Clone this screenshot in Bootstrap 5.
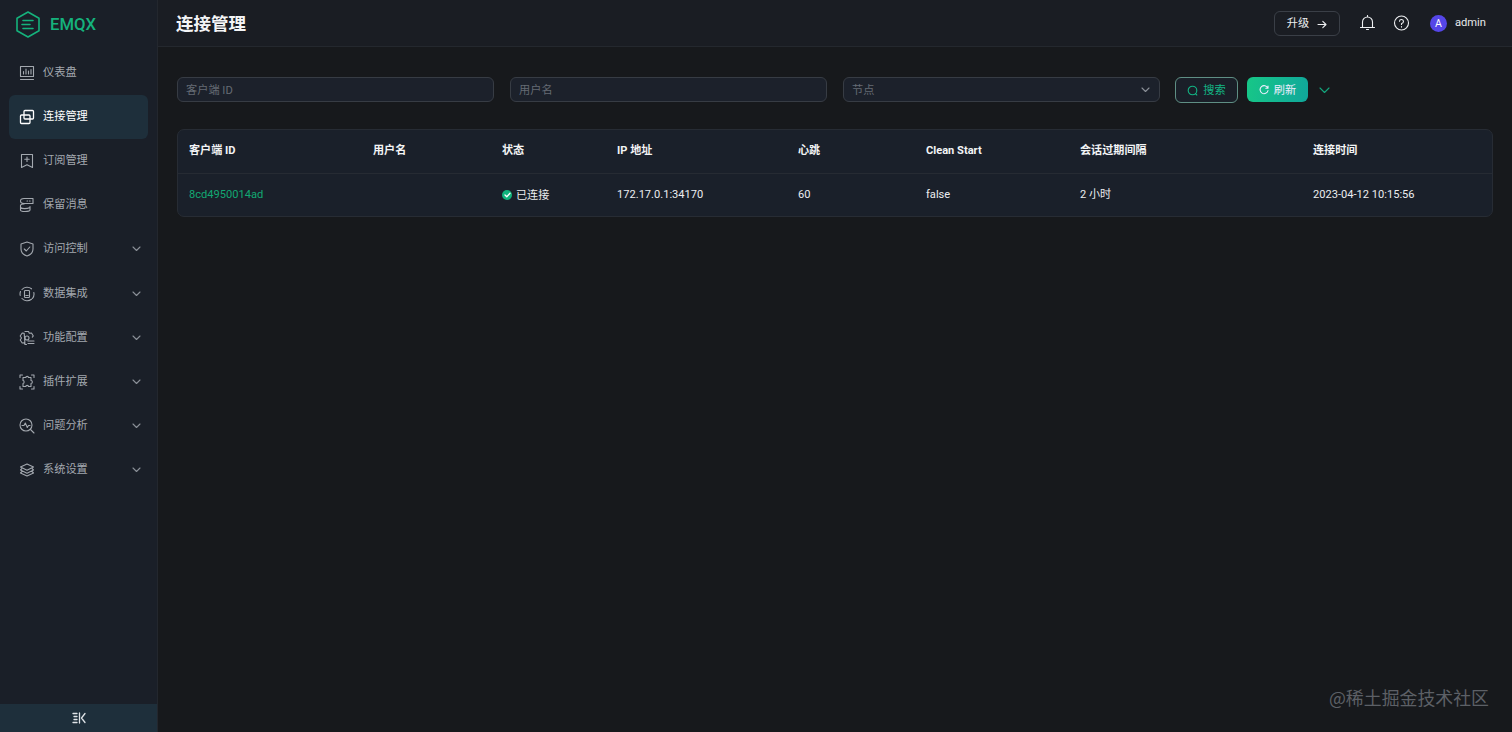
<!DOCTYPE html>
<html lang="zh">
<head>
<meta charset="utf-8">
<title>EMQX</title>
<link href="https://cdn.jsdelivr.net/npm/bootstrap@5.3.0/dist/css/bootstrap.min.css" rel="stylesheet">
<style>
html,body{height:100%;overflow:hidden}
body{background:#17191c;color:#e9ebee;font-family:Roboto,"Noto Sans CJK SC",sans-serif;font-size:11.2px}
.shell{height:732px}
.side{width:158px;flex:none;background:#1a1f28;border-right:1px solid #23272e}
.brand{height:50.5px;padding:11px 0 0 16px;color:#15b27c;font-size:16.7px;font-weight:500;gap:10px}
.menu-row{height:44.2px;padding:0 16px 0 19px;color:#a3a8af;gap:8px}
.menu-row svg.ico{width:16px;height:16px;flex:none}
.menu-row svg.chev{width:9px;height:6px;color:#8b9098}
.menu-row .lbl{flex:1;padding-top:1px}
.menu-row.on{color:#fff;background:#1e2f3b;border-radius:6px;margin:0 9px;padding:0 0 0 10px;width:139px}
.ico{fill:none;stroke:currentColor;stroke-width:1.1;stroke-linecap:round;stroke-linejoin:round}
.chev{width:9px;height:6px;flex:none;color:#8b9098}
.fold{height:28px;background:#1e2f3b;color:#dfe3e7}
.topbar{height:47px;flex:none;border-bottom:1px solid #24282e;background:#1a1d23;padding:1px 26px 0 18px}
.page-title{font-size:17.5px;font-weight:700;color:#f4f5f6;margin:0;padding-top:2px}
.up-btn{width:66px;height:25px;border:1px solid #3a3f47;border-radius:6px;color:#eceef0;gap:8px;background:transparent;font-size:11.2px;line-height:1;padding:1px 0 0}
.avatar{width:17px;height:17px;background:#5546e8;color:#fff;font-size:10.5px}
.tool-ico{width:17px;height:17px;color:#eef0f2}
.filters{padding:30px 0 0 19px}
.field{width:317px;height:25px;background:#1c212b;border:1px solid #373c44;border-radius:6px;color:#6a7079;padding:2px 8px 0;font-size:11.2px;box-shadow:none}
.field::placeholder{color:#656b74;opacity:1}
.field-wrap{width:317px;margin-left:16px}
.field-wrap .chev{position:absolute;right:10px;top:10px}
.field-mid{margin-left:16px}
.btn-find{width:63px;height:26px;border:1px solid #5f8f84;border-radius:6px;background:#1a1f28;color:#13b584;font-size:11.2px;line-height:1;padding:0;gap:5px;margin-left:15px}
.btn-reload{width:61px;height:25px;border:0;border-radius:6px;background:linear-gradient(100deg,#17c787,#10a79b);color:#eef;font-size:11.2px;line-height:1;padding:0;gap:5px;margin-left:9px}
.btn-word{padding-top:2px}
.more{width:11px;height:7px;color:#14a67d;margin-left:11px;align-self:center}
.grid-card{margin:26px 19px 0;background:#1a202a;border:1px solid #272c34;border-radius:7px;overflow:hidden}
.data-tbl{table-layout:fixed;width:100%;margin:0;--bs-table-bg:transparent;--bs-table-color:#eceef0;--bs-table-border-color:#262b33;font-size:11.1px}
.data-tbl th{height:43px;padding:1px 11px 0;vertical-align:middle;font-weight:700;color:#f3f4f5}
.data-tbl td{height:43px;padding:2px 11px 0;vertical-align:middle;border-bottom:0}
.data-tbl th:nth-child(1){width:184px}
.data-tbl th:nth-child(2){width:129px}
.data-tbl th:nth-child(3){width:115px}
.data-tbl th:nth-child(4){width:181px}
.data-tbl th:nth-child(5){width:128px}
.data-tbl th:nth-child(6){width:154px}
.data-tbl th:nth-child(7){width:233px}
.cid{color:#12a873;text-decoration:none}
.dot-ok{width:10px;height:10px;background:#10b37c;color:#fff;margin-bottom:3px}
.wm{position:absolute;right:23px;bottom:25px;color:#5d6066;font-size:17.9px;line-height:1;font-family:"Noto Sans CJK SC",sans-serif}
</style>
</head>
<body>
<div class="d-flex shell">
  <aside class="side d-flex flex-column">
    <div class="brand d-flex align-items-start">
      <svg width="24" height="27" viewBox="0 0 24 27" class="ico" style="stroke-width:1.6"><path d="M12 1 23 7.2V19.8L12 26 1 19.8V7.2Z"/><path d="M7 9.5H17M6 13.5H14M7 17.5H17"/></svg>
      <span style="line-height:27px">EMQX</span>
    </div>
    <nav class="flex-grow-1">
      <div class="menu-row d-flex align-items-center"><svg class="ico" viewBox="0 0 16 16"><rect x="1.5" y="1.5" width="13" height="10"/><path d="M1.5 14.5H14.5M4.5 9V6.5M7 9V4M9.5 9V6M12 9V4.5"/></svg><span class="lbl">仪表盘</span></div>
      <div class="menu-row on d-flex align-items-center"><svg class="ico" viewBox="0 0 16 16" style="stroke-width:1.3"><rect x="5" y="1.5" width="9.5" height="8.5" rx="1"/><rect x="1.5" y="6" width="9.5" height="8.5" rx="1"/></svg><span class="lbl">连接管理</span></div>
      <div class="menu-row d-flex align-items-center"><svg class="ico" viewBox="0 0 16 16"><path d="M2.5 1.5H13.5V14.5L8 11.8 2.5 14.5ZM8 4V8.5M5.8 6.2H10.2"/></svg><span class="lbl">订阅管理</span></div>
      <div class="menu-row d-flex align-items-center"><svg class="ico" viewBox="0 0 16 16"><path d="M5 1.5H14V6.5H5C3 6.5 1.5 6 1.500 4S3 1.500 5 1.500ZM1.500 8.500C1.500 7.500 3 7 5 7M1.500 8.500V13C1.500 14 3 14.500 6 14.500S11 14 11 13V9.500M1.500 10.500C3 12 8 12 11 10.500M8 4H8.600M10.500 4H11.100"/></svg><span class="lbl">保留消息</span></div>
      <div class="menu-row d-flex align-items-center"><svg class="ico" viewBox="0 0 16 16"><path d="M8 1 14 3V8C14 11.500 11 14 8 15 5 14 2 11.500 2 8V3ZM5.300 8 7.300 10 10.800 6"/></svg><span class="lbl">访问控制</span><svg class="chev ico" viewBox="0 0 9 6"><path d="M1 1 4.500 4.500 8 1"/></svg></div>
      <div class="menu-row d-flex align-items-center"><svg class="ico" viewBox="0 0 16 16"><path d="M3 3.500A7 7 0 0 1 12.500 2.800M14.800 6.500A7 7 0 0 1 13.500 12.500M12.500 13.200A7 7 0 0 1 3 12.500M1.200 9.500A7 7 0 0 1 1.500 5.500"/><rect x="5.500" y="4.500" width="5" height="7" rx=".8"/><path d="M6.800 9.500H9.200"/></svg><span class="lbl">数据集成</span><svg class="chev ico" viewBox="0 0 9 6"><path d="M1 1 4.500 4.500 8 1"/></svg></div>
      <div class="menu-row d-flex align-items-center"><svg class="ico" viewBox="0 0 16 16"><path d="M6 1.500H9.500L10.300 3.300 12.500 3 14.300 6 13.300 7.200M6 14.500 5.200 12.700 3.200 13 1.200 10 2.500 8 1.200 6 3.200 3 5.200 3.300ZM6 14.500H7.500"/><circle cx="8" cy="8" r="2"/><path d="M9 11H15M9 13.500H15"/></svg><span class="lbl">功能配置</span><svg class="chev ico" viewBox="0 0 9 6"><path d="M1 1 4.500 4.500 8 1"/></svg></div>
      <div class="menu-row d-flex align-items-center"><svg class="ico" viewBox="0 0 16 16"><path d="M1 3.500V1H3.500M12.500 1H15V3.500M15 12.500V15H12.500M3.500 15H1V12.500"/><path d="M4 3.500H6.800C6.800 2 9.500 2 9.500 3.500H12V6.500C13.800 6.500 13.800 9.500 12 9.500V12.500H9.500C9.500 11 6.800 11 6.800 12.500H4V9.500C5.500 9.500 5.500 6.500 4 6.500Z"/></svg><span class="lbl">插件扩展</span><svg class="chev ico" viewBox="0 0 9 6"><path d="M1 1 4.500 4.500 8 1"/></svg></div>
      <div class="menu-row d-flex align-items-center"><svg class="ico" viewBox="0 0 16 16"><circle cx="7" cy="7" r="6"/><path d="M11.500 11.500 15 15M3 7.500H5L6.300 5 8.300 9.500 9.500 7.500H11"/></svg><span class="lbl">问题分析</span><svg class="chev ico" viewBox="0 0 9 6"><path d="M1 1 4.500 4.500 8 1"/></svg></div>
      <div class="menu-row d-flex align-items-center"><svg class="ico" viewBox="0 0 16 16"><path d="M8 2 14.500 5 8 8.200 1.500 5Z"/><path d="M3 6.500 1.500 8 8 11.200 14.500 8 13 6.500M3 9.500 1.500 11 8 14 14.500 11 13 9.500"/></svg><span class="lbl">系统设置</span><svg class="chev ico" viewBox="0 0 9 6"><path d="M1 1 4.500 4.500 8 1"/></svg></div>
    </nav>
    <div class="fold d-flex align-items-center justify-content-center">
      <svg class="ico" width="14" height="12" viewBox="0 0 14 12" style="stroke-width:1.300"><path d="M1 1.500H5M2 4.500H5M2 7.500H5M1 10.500H5M7.500 1V11M13 1.500 9.500 6 13 10.500"/></svg>
    </div>
  </aside>

  <main class="flex-grow-1 d-flex flex-column position-relative">
    <header class="topbar d-flex align-items-center">
      <h1 class="page-title">连接管理</h1>
      <div class="ms-auto d-flex align-items-center">
        <button class="up-btn btn d-flex align-items-center justify-content-center">升级<svg class="ico" width="10" height="9" viewBox="0 0 10 9"><path d="M1 4.500H9M5.800 1.300 9 4.500 5.800 7.700"/></svg></button>
        <svg class="ico tool-ico" style="margin-left:19px" viewBox="0 0 17 17"><path d="M3.500 12V7A5 5 0 0 1 13.500 7V12M1.500 12.500H15.500M7.500 14.500H9.500M8.500 .5V2"/></svg>
        <svg class="ico tool-ico" style="margin-left:17px" viewBox="0 0 17 17"><circle cx="8.500" cy="8" r="7"/><path d="M6.500 6.300A2 2 0 1 1 8.500 8.500V9.500M8.500 11.500V12.100"/></svg>
        <span class="avatar rounded-circle d-flex align-items-center justify-content-center" style="margin-left:20px">A</span>
        <span class="ms-2" style="color:#e6e8ea">admin</span>
      </div>
    </header>

    <form class="filters d-flex align-items-start">
      <input class="form-control field" placeholder="客户端 ID">
      <input class="form-control field field-mid" placeholder="用户名">
      <div class="field-wrap position-relative">
        <input class="form-control field" placeholder="节点">
        <svg class="chev ico" viewBox="0 0 9 6"><path d="M1 1 4.500 4.500 8 1"/></svg>
      </div>
      <button type="button" class="btn btn-find d-flex align-items-center justify-content-center"><svg class="ico" width="11" height="11" viewBox="0 0 11 11"><circle cx="5.500" cy="5.500" r="4.300"/><path d="M8.500 8.700 9.800 10"/></svg><span class="btn-word">搜索</span></button>
      <button type="button" class="btn btn-reload d-flex align-items-center justify-content-center"><svg class="ico" width="10" height="10" viewBox="0 0 10 10"><path d="M8.800 3.200A4 4 0 1 0 9 5.500M9 1V3.300H6.800"/></svg><span class="btn-word">刷新</span></button>
      <svg class="more ico" viewBox="0 0 11 7"><path d="M1 1 5.500 5.500 10 1"/></svg>
    </form>

    <div class="grid-card">
      <table class="table data-tbl">
        <thead>
          <tr><th>客户端 ID</th><th>用户名</th><th>状态</th><th>IP 地址</th><th>心跳</th><th>Clean Start</th><th>会话过期间隔</th><th>连接时间</th></tr>
        </thead>
        <tbody>
          <tr>
            <td><a class="cid" href="#">8cd4950014ad</a></td>
            <td></td>
            <td><span class="d-inline-flex align-items-center gap-1"><span class="dot-ok rounded-circle d-inline-flex align-items-center justify-content-center"><svg class="ico" width="7" height="6" viewBox="0 0 7 6" style="stroke-width:1.300"><path d="M1 3 2.800 4.800 6 1.200"/></svg></span>已连接</span></td>
            <td>172.17.0.1:34170</td>
            <td>60</td>
            <td>false</td>
            <td>2 小时</td>
            <td>2023-04-12 10:15:56</td>
          </tr>
        </tbody>
      </table>
    </div>
    <div class="wm">@稀土掘金技术社区</div>
  </main>
</div>
</body>
</html>
